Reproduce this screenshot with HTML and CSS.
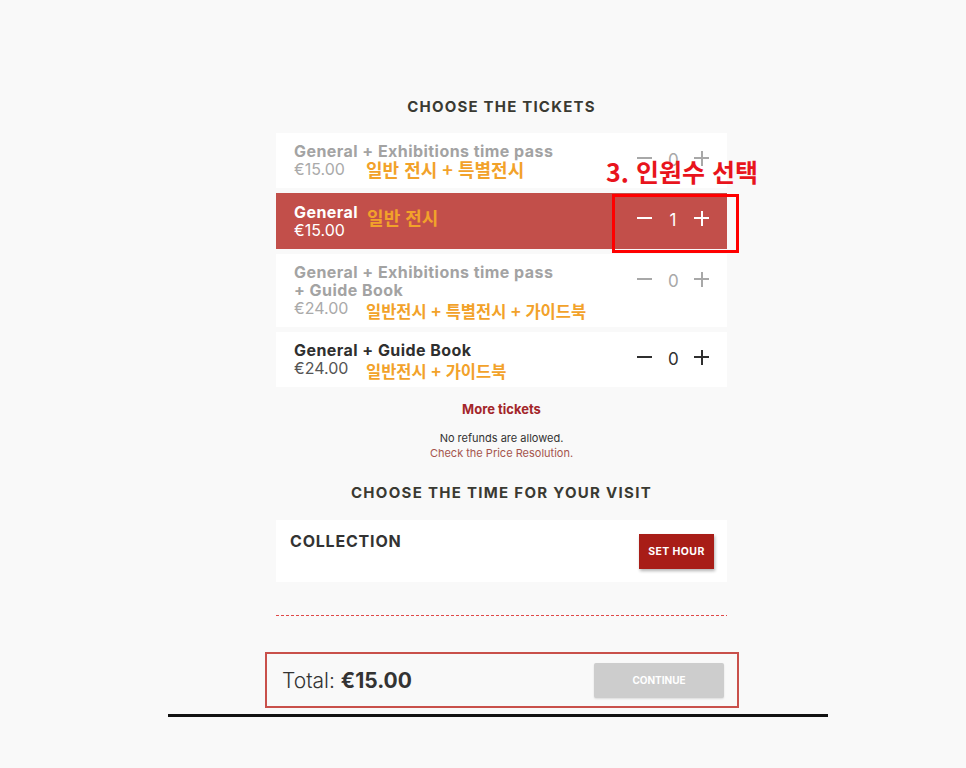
FILE: index.html
```html
<!DOCTYPE html>
<html lang="ko">
  <head>
    <meta charset="UTF-8" />
    <meta name="viewport" content="width=device-width, initial-scale=1.0" />
    <title>Choose the tickets</title>
    <link rel="stylesheet" href="styles.css">
  </head>
  <body>
    <div class="frame">
      <div class="column">
        <h2 class="heading">CHOOSE THE TICKETS</h2>

        <div class="ticket muted">
          <div class="info">
            <div class="name">General + Exhibitions time pass</div>
            <div class="price-row">
              <span class="price">€15.00</span>
              <span class="note">일반 전시 + 특별전시</span>
            </div>
          </div>
          <div class="counter">
            <span class="minus"></span><span class="qty">0</span><span class="plus"></span>
          </div>
          <div class="callout">3. 인원수 선택</div>
        </div>

        <div class="ticket selected">
          <div class="info">
            <div class="name-row">
              <span class="name">General</span>
              <span class="note">일반 전시</span>
            </div>
            <div class="price">€15.00</div>
          </div>
          <div class="counter">
            <span class="minus"></span><span class="qty">1</span><span class="plus"></span>
          </div>
          <div class="callout-box"></div>
        </div>

        <div class="ticket muted">
          <div class="info">
            <div class="name">General + Exhibitions time pass<br>+ Guide Book</div>
            <div class="price-row">
              <span class="price">€24.00</span>
              <span class="note low">일반전시 + 특별전시 + 가이드북</span>
            </div>
          </div>
          <div class="counter">
            <span class="minus"></span><span class="qty">0</span><span class="plus"></span>
          </div>
        </div>

        <div class="ticket">
          <div class="info">
            <div class="name">General + Guide Book</div>
            <div class="price-row">
              <span class="price">€24.00</span>
              <span class="note low">일반전시 + 가이드북</span>
            </div>
          </div>
          <div class="counter">
            <span class="minus"></span><span class="qty">0</span><span class="plus"></span>
          </div>
        </div>

        <a class="more" href="#">More tickets</a>
        <p class="refunds">No refunds are allowed.<br><a href="#">Check the Price Resolution.</a></p>

        <h2 class="heading second">CHOOSE THE TIME FOR YOUR VISIT</h2>

        <div class="slot">
          <span class="slot-name">COLLECTION</span>
          <button class="set-hour">SET HOUR</button>
        </div>

        <div class="divider"></div>

        <div class="total">
          <span class="total-label">Total: <b>€15.00</b></span>
          <button class="continue">CONTINUE</button>
        </div>
      </div>
      <div class="rule"></div>
    </div>
  </body>
</html>
```

FILE: styles.css
```css
* {
  margin: 0;
  padding: 0;
  box-sizing: border-box;
}
body {
  background-color: #f9f9f9;
  font-family: "Inter", "Noto Sans CJK KR", sans-serif;
  color: #333;
}
.frame {
  width: 660px;
  margin-left: 168px;
  padding-top: 97px;
}
.column {
  width: 451px;
  margin-left: 108px;
}
.heading {
  font-size: 15px;
  line-height: 20px;
  font-weight: 700;
  letter-spacing: 1.2px;
  text-align: center;
  color: #3a3a32;
  margin-bottom: 16px;
}
.heading.second {
  margin-top: 22px;
  margin-bottom: 17px;
  letter-spacing: 1.3px;
}
.ticket {
  position: relative;
  display: flex;
  justify-content: space-between;
  align-items: flex-start;
  background-color: #fff;
  padding: 9px 18px;
  margin-bottom: 5px;
}
.name {
  font-size: 16px;
  line-height: 18px;
  font-weight: 700;
  letter-spacing: 0.45px;
  color: #2f2f2f;
}
.price {
  font-size: 16px;
  line-height: 19px;
  color: #555;
}
.price-row,
.name-row {
  display: flex;
  align-items: center;
}
.price-row .price {
  width: 58px;
}
.note {
  font-family: "Noto Sans CJK KR", sans-serif;
  font-weight: 700;
  font-size: 18px;
  line-height: 19px;
  color: #f2a22a;
  margin-left: 14px;
}
.note.low {
  position: relative;
  top: 3px;
  font-size: 16.5px;
}
.name-row .note {
  margin-left: 9px;
  position: relative;
  top: 6px;
}
.muted .name {
  color: #a3a3a3;
}
.muted .price {
  color: #aaa;
}
.selected {
  background-color: #c24f4a;
}
.selected .name,
.selected .price {
  color: #fff;
}
.counter {
  display: flex;
  align-items: center;
  gap: 16px;
  margin-top: 6px;
  color: #2f2f2f;
}
.counter .qty {
  font-size: 17px;
  line-height: 20px;
  width: 10px;
  text-align: center;
  position: relative;
  top: 2px;
}
.minus,
.plus {
  position: relative;
  width: 15px;
  height: 15px;
}
.minus::before,
.plus::before,
.plus::after {
  content: "";
  position: absolute;
  background-color: currentColor;
}
.minus::before,
.plus::before {
  left: 0;
  top: 6px;
  width: 15px;
  height: 2px;
}
.plus::after {
  left: 6.5px;
  top: 0;
  width: 2px;
  height: 15px;
}
.muted .counter {
  color: #a8a8a8;
}
.selected .counter {
  color: #fff;
}
.callout {
  position: absolute;
  left: 330px;
  top: 23px;
  font-family: "Noto Sans CJK KR", sans-serif;
  font-weight: 700;
  font-size: 25px;
  line-height: 30px;
  color: #e8141c;
  white-space: nowrap;
}
.callout-box {
  position: absolute;
  left: 336px;
  top: 1px;
  width: 127px;
  height: 59px;
  border: 3px solid #f00;
}
.more {
  display: block;
  margin-top: 14px;
  font-size: 13px;
  line-height: 16px;
  font-weight: 700;
  color: #a3262a;
  text-align: center;
  text-decoration: none;
}
.refunds {
  margin-top: 14px;
  font-size: 11px;
  line-height: 15px;
  text-align: center;
  color: #333;
}
.refunds a {
  color: #a5554d;
  text-decoration: none;
}
.slot {
  display: flex;
  justify-content: space-between;
  align-items: flex-start;
  background-color: #fff;
  height: 62px;
  padding: 12px 13px 0 14px;
}
.slot-name {
  font-size: 16px;
  line-height: 18px;
  font-weight: 700;
  letter-spacing: 0.8px;
  color: #333;
}
.set-hour {
  margin-top: 2px;
  width: 75px;
  height: 35px;
  border: none;
  background-color: #a81d17;
  color: #fff;
  font-family: "Inter", sans-serif;
  font-size: 10.5px;
  font-weight: 700;
  letter-spacing: 0.4px;
  box-shadow: 1px 2px 3px rgb(0 0 0 / 30%);
  cursor: pointer;
}
.divider {
  margin-top: 33px;
  height: 1px;
  background-image: repeating-linear-gradient(90deg, #e04848 0 3px, transparent 3px 5px);
}
.total {
  display: flex;
  justify-content: space-between;
  align-items: center;
  margin: 36px -12px 0 -11px;
  height: 56px;
  padding: 0 13px 0 15px;
  border: 2px solid #c9504b;
}
.total-label {
  font-size: 21px;
  font-weight: 300;
  color: #333;
}
.total-label b {
  font-weight: 700;
}
.continue {
  width: 130px;
  height: 35px;
  border: none;
  border-radius: 2px;
  background-color: #cdcdcd;
  color: #fff;
  font-family: "Inter", sans-serif;
  font-size: 10px;
  font-weight: 700;
  box-shadow: 0 1px 2px rgb(0 0 0 / 12%);
}
.rule {
  margin-top: 6px;
  height: 3px;
  background-color: #111;
}
```
